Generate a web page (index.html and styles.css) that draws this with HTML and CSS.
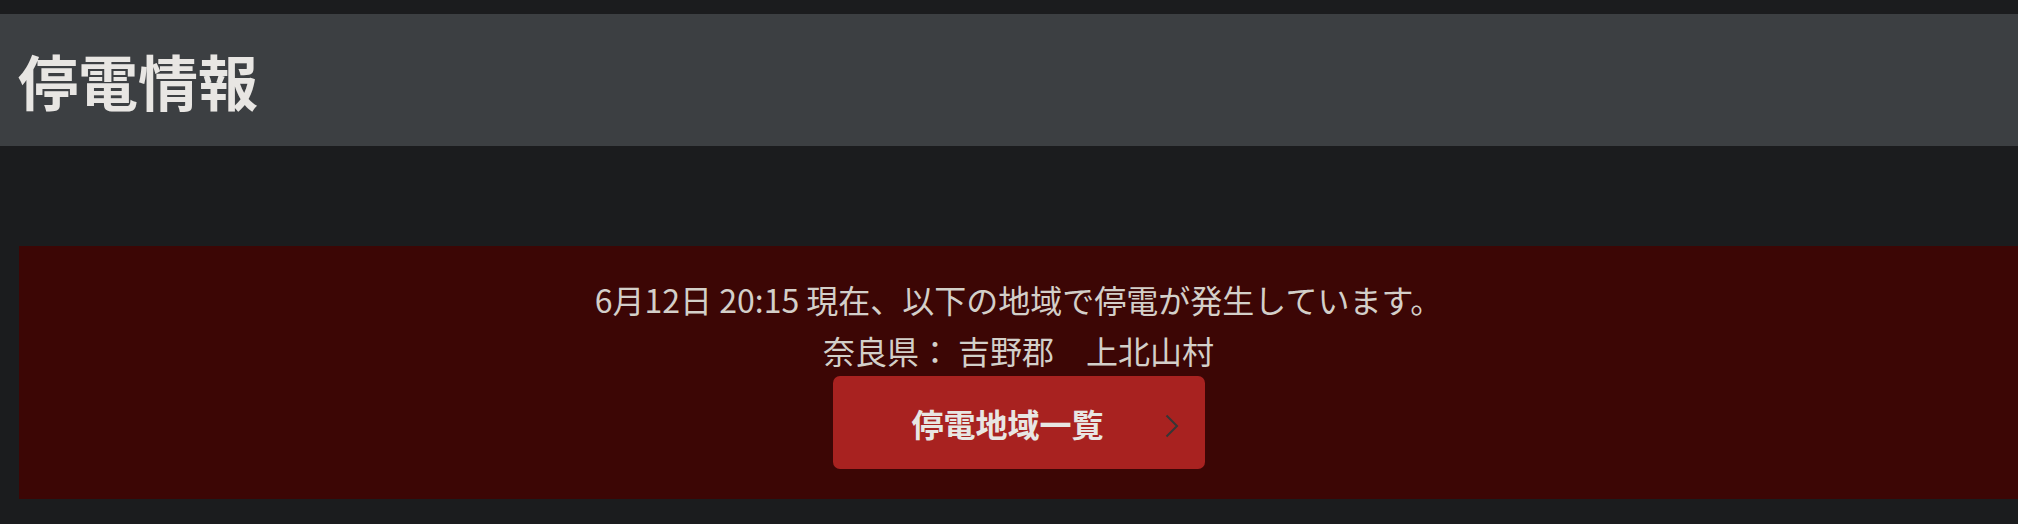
FILE: index.html
```html
<!DOCTYPE html>
<html lang="ja">
<head>
<meta charset="utf-8">
<title>停電情報</title>
<link rel="stylesheet" href="styles.css">
</head>
<body>
<div class="page">
  <header class="header">
    <h1 class="title">停電情報</h1>
  </header>
  <section class="alert">
    <p class="alert-line">6月12日 20:15 現在、以下の地域で停電が発生しています。</p>
    <p class="alert-line">奈良県： 吉野郡　上北山村</p>
    <a class="alert-button" href="#">
      <span class="alert-button-label">停電地域一覧</span>
      <svg class="alert-button-arrow" width="14" height="24" viewBox="0 0 14 24" aria-hidden="true">
        <path d="M1.5 1.5 L12 12 L1.5 22.5" fill="none" stroke="#363636" stroke-width="2"/>
      </svg>
    </a>
  </section>
</div>
</body>
</html>
```
FILE: styles.css
```css
html, body {
  margin: 0;
  padding: 0;
  background: #1b1c1e;
}

body {
  font-family: "Noto Sans CJK JP", "Noto Sans", sans-serif;
  color: #e8e6e3;
}

.page {
  padding-top: 14px;
}

.header {
  background: #3c3f42;
  height: 132px;
  display: flex;
  align-items: center;
  padding-left: 18px;
}

.title {
  margin: 0;
  font-size: 60px;
  font-weight: 700;
  line-height: 1;
  color: #e8e6e3;
}

.alert {
  margin: 100px 0 0 19px;
  background: #3c0605;
  padding: 28px 0 30px;
  display: flex;
  flex-direction: column;
  align-items: center;
}

.alert-line {
  margin: 0;
  font-size: 32px;
  line-height: 1.6;
  color: #d3cfc9;
}

.alert-button {
  position: relative;
  box-sizing: border-box;
  width: 372px;
  height: 93px;
  background: #a82220;
  border-radius: 7px;
  display: flex;
  align-items: center;
  justify-content: center;
  padding-right: 22px;
  text-decoration: none;
}

.alert-button-label {
  font-size: 32px;
  font-weight: 700;
  color: #e8e6e3;
  line-height: 1;
}

.alert-button-arrow {
  position: absolute;
  right: 26px;
  top: 38px;
}
```
